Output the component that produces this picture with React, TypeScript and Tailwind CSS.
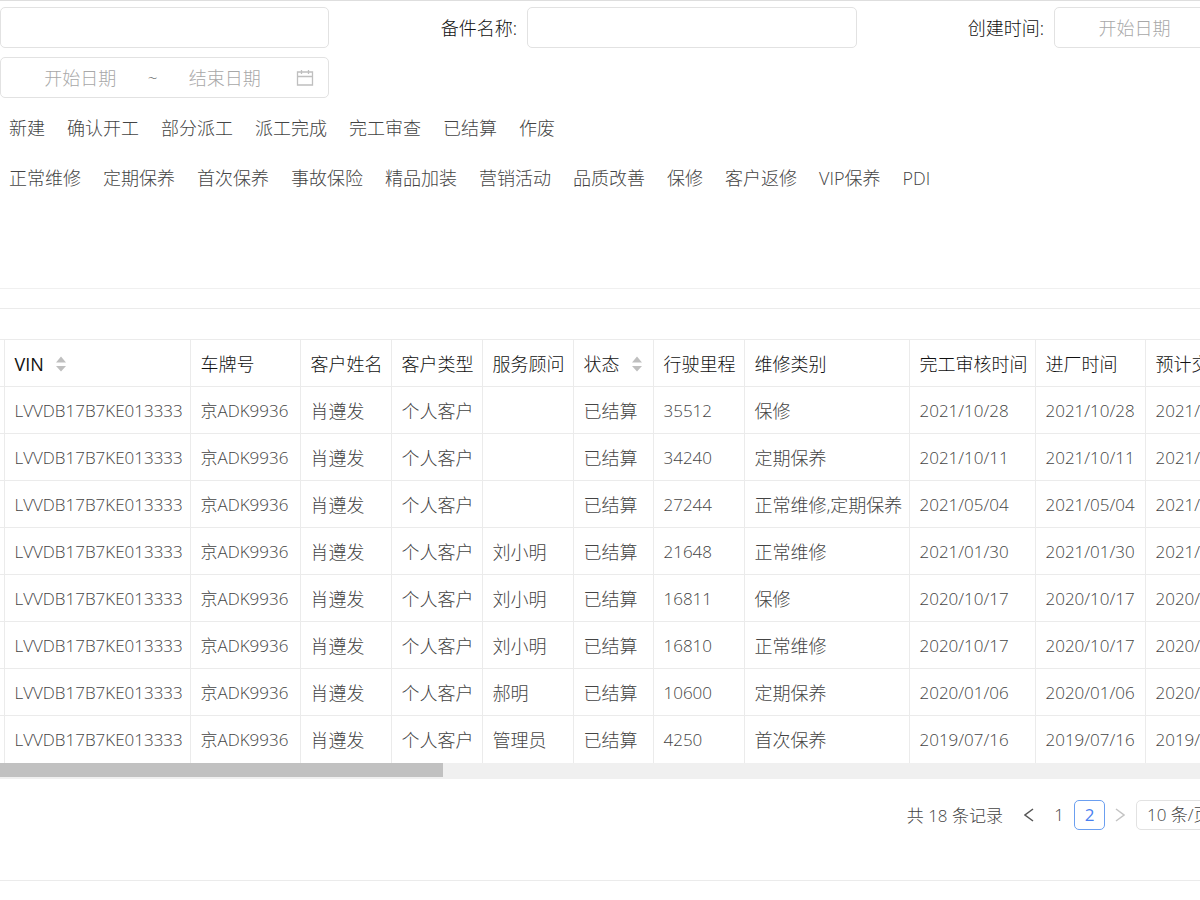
import React from 'react';

interface WorkOrder {
  adviser: string;
  mileage: string;
  category: string;
  date: string;
}

interface Column {
  title: string;
  width: string;
  sortable?: boolean;
}

const VIN = 'LVVDB17B7KE013333';
const PLATE = '京ADK9936';
const CUSTOMER = '肖遵发';

const statuses = ['新建', '确认开工', '部分派工', '派工完成', '完工审查', '已结算', '作废'];

const categories = [
  '正常维修',
  '定期保养',
  '首次保养',
  '事故保险',
  '精品加装',
  '营销活动',
  '品质改善',
  '保修',
  '客户返修',
  'VIP保养',
  'PDI',
];

const columns: Column[] = [
  { title: 'VIN', width: 'w-[186px]', sortable: true },
  { title: '车牌号', width: 'w-[110px]' },
  { title: '客户姓名', width: 'w-[91px]' },
  { title: '客户类型', width: 'w-[91px]' },
  { title: '服务顾问', width: 'w-[91px]' },
  { title: '状态', width: 'w-[80px]', sortable: true },
  { title: '行驶里程', width: 'w-[91px]' },
  { title: '维修类别', width: 'w-[165px]' },
  { title: '完工审核时间', width: 'w-[126px]' },
  { title: '进厂时间', width: 'w-[110px]' },
  { title: '预计交车时间', width: 'w-[239px]' },
];

const orders: WorkOrder[] = [
  { adviser: '', mileage: '35512', category: '保修', date: '2021/10/28' },
  { adviser: '', mileage: '34240', category: '定期保养', date: '2021/10/11' },
  { adviser: '', mileage: '27244', category: '正常维修,定期保养', date: '2021/05/04' },
  { adviser: '刘小明', mileage: '21648', category: '正常维修', date: '2021/01/30' },
  { adviser: '刘小明', mileage: '16811', category: '保修', date: '2020/10/17' },
  { adviser: '刘小明', mileage: '16810', category: '正常维修', date: '2020/10/17' },
  { adviser: '郝明', mileage: '10600', category: '定期保养', date: '2020/01/06' },
  { adviser: '管理员', mileage: '4250', category: '首次保养', date: '2019/07/16' },
];

const CalendarIcon = () => (
  <svg className="ml-1 h-[18px] w-[18px] shrink-0 text-[#bfbfbf]" viewBox="0 0 18 18" fill="none" stroke="currentColor" strokeWidth="1.3">
    <path d="M1.5 3h15v13h-15zM1.5 7.5h15M5.5 1v4M12.5 1v4" />
  </svg>
);

const SortIcon = () => (
  <svg className="h-4 w-[10px] shrink-0" viewBox="0 0 10 16" fill="#bfbfbf">
    <path d="M5 0.5 10 6.5H0zM5 15.5 10 10H0z" />
  </svg>
);

const DateRange = ({ label }: { label: string }) => (
  <div className="flex h-[41px] items-center rounded-[5px] border border-[#e2e2e2] pr-[14px] pl-3">
    <input
      aria-label={`${label}开始`}
      placeholder="开始日期"
      className="w-0 flex-1 text-center outline-none placeholder:text-[#a8a8a8]"
    />
    <span className="text-[17px] text-[#555]">~</span>
    <input
      aria-label={`${label}结束`}
      placeholder="结束日期"
      className="w-0 flex-1 text-center outline-none placeholder:text-[#a8a8a8]"
    />
    <CalendarIcon />
  </div>
);

const TagRow = ({ tags }: { tags: string[] }) => (
  <div className="flex h-[50px] items-center gap-[22px] pl-[9px] text-[#444]">
    {tags.map((tag) => (
      <button key={tag} type="button" className="whitespace-nowrap">
        {tag}
      </button>
    ))}
  </div>
);

const OrderTable = () => (
  <table className="w-full table-fixed border-collapse whitespace-nowrap">
    <colgroup>
      <col className="w-1" />
      {columns.map((column) => (
        <col key={column.title} className={column.width} />
      ))}
    </colgroup>
    <thead>
      <tr className="h-[47px] border-y border-[#ebebeb] text-[#111]">
        <td className="border-r border-[#ebebeb]" />
        {columns.map((column) => (
          <th key={column.title} className="border-r border-[#ebebeb] pt-[2px] pl-[10px] text-left font-light">
            {column.sortable ? (
              <button type="button" className="flex items-center gap-3">
                <span className={column.title === 'VIN' ? 'font-normal' : ''}>{column.title}</span>
                <SortIcon />
              </button>
            ) : (
              column.title
            )}
          </th>
        ))}
      </tr>
    </thead>
    <tbody className="text-[#444]">
      {orders.map((order) => (
        <tr
          key={order.mileage}
          className="h-[47px] border-b border-[#ebebeb] last:border-b-0 [&>td]:border-r [&>td]:border-[#ebebeb] [&>td]:pt-px [&>td+td]:pl-[10px]"
        >
          <td />
          <td className="text-[17px]">{VIN}</td>
          <td className="text-[17px]">{PLATE}</td>
          <td>{CUSTOMER}</td>
          <td>个人客户</td>
          <td>{order.adviser}</td>
          <td>已结算</td>
          <td className="text-[17px]">{order.mileage}</td>
          <td>{order.category}</td>
          <td className="text-[17px]">{order.date}</td>
          <td className="text-[17px]">{order.date}</td>
          <td className="text-[17px]">{order.date}</td>
        </tr>
      ))}
    </tbody>
  </table>
);

const Pagination = () => (
  <nav aria-label="分页" className="flex items-center justify-end pr-[118px] text-[17px] text-[#444]">
    <span className="mr-[18px] pt-[2px]">共 18 条记录</span>
    <button type="button" aria-label="上一页" className="mr-[7px] flex w-4 justify-center">
      <svg className="h-[14px] w-[10px]" viewBox="0 0 10 14" fill="none" stroke="#555" strokeWidth="1.5">
        <path d="M9 1 1 7l8 6" />
      </svg>
    </button>
    <button type="button" className="h-[30px] w-[30px]">
      1
    </button>
    <button
      type="button"
      aria-current="page"
      className="h-[30px] w-[31px] rounded-[5px] border border-[#6b9ff0] font-normal text-[#4a80f0]"
    >
      2
    </button>
    <button type="button" aria-label="下一页" disabled className="mr-2 ml-[7px] flex w-4 justify-center">
      <svg className="h-[14px] w-[10px]" viewBox="0 0 10 14" fill="none" stroke="#c4c4c4" strokeWidth="1.5">
        <path d="m1 1 8 6-8 6" />
      </svg>
    </button>
    <select
      aria-label="每页条数"
      className="h-[30px] w-[130px] appearance-none rounded-[5px] border border-[#e2e2e2] bg-white pl-[10px]"
    >
      <option>10 条/页</option>
      <option>20 条/页</option>
    </select>
  </nav>
);

const App: React.FC = () => {
  return (
    <main className="overflow-x-hidden bg-white font-['Open_Sans','Noto_Sans_CJK_SC',sans-serif] text-[18px] leading-6 font-light">
      <div className="min-w-[1384px]">
        <section className="border-y border-t-[#dedede] border-b-[#f0f0f0] pt-[6px] pb-[85px]">
          <form className="grid grid-cols-[329fr_528fr_527fr] gap-y-[9px] pb-[5px]">
            <input aria-label="查询条件" className="h-[41px] w-full rounded-[5px] border border-[#e2e2e2] px-3" />
            <div className="flex items-center justify-end">
              <label htmlFor="part-name" className="mr-[10px] text-[#111]">
                备件名称:
              </label>
              <input id="part-name" className="h-[41px] w-[330px] rounded-[5px] border border-[#e2e2e2] px-3" />
            </div>
            <div className="flex items-center justify-end">
              <span className="mr-[10px] text-[#111]">创建时间:</span>
              <div className="w-[330px]">
                <DateRange label="创建时间" />
              </div>
            </div>
            <DateRange label="交车时间" />
          </form>
          <TagRow tags={statuses} />
          <TagRow tags={categories} />
        </section>
        <section className="mt-[19px] border-y border-[#ebebeb] pt-[30px] pb-[50px]">
          <OrderTable />
          <div className="h-4 bg-[#f0f0f0]">
            <div className="h-[14px] w-[32%] bg-[#c1c1c1]" />
          </div>
          <div className="mt-[21px]">
            <Pagination />
          </div>
        </section>
      </div>
    </main>
  );
};

export default App;
